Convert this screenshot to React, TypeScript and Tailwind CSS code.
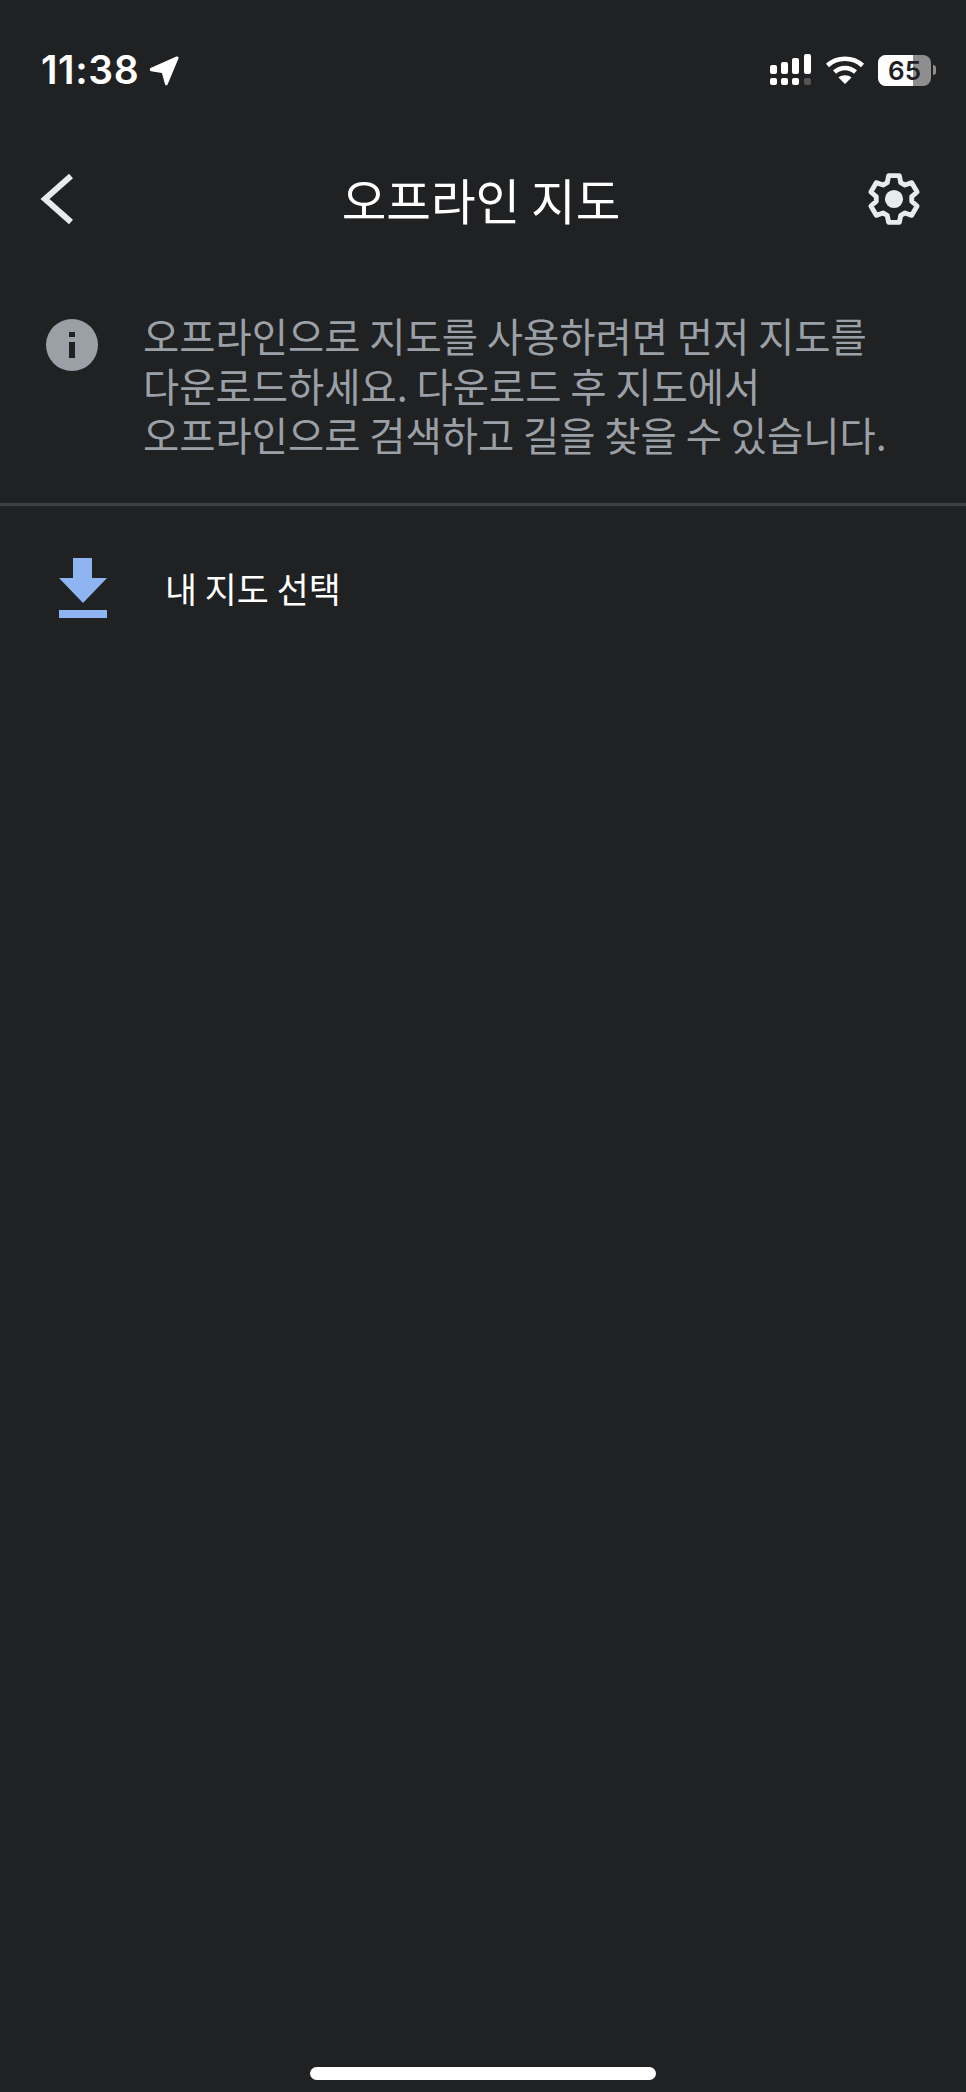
const ko = { fontFamily: '"Noto Sans CJK KR", "Liberation Sans", sans-serif' };

const StatusBar = () => (
    <div className="flex h-[100px] items-start justify-between pt-[48px] pl-[41px] pr-[30px]">
        <div className="flex items-center gap-[10px]">
            <span className="text-[39px] leading-[44px] font-semibold text-white tracking-[0.6px]" style={{ fontFamily: 'Inter, sans-serif' }}>11:38</span>
            <svg width="31" height="31" viewBox="0 0 30 30" fill="#fff"><path d="M1.500 12.500 26.500 1.500c1.500-.6 2.600.5 2 2L18 28.500c-.6 1.300-2.200 1.100-2.500-.2L12.500 17.500 2 15.800C.6 15.500.300 13.100 1.500 12.500Z" /></svg>
        </div>
        <div className="flex items-center gap-[13px] pt-[6px]">
            <svg width="42" height="32" viewBox="0 0 42 32" fill="#fff">
                <rect x="0" y="11" width="7" height="9" rx="2" /><rect x="11" y="8" width="7" height="12" rx="2" /><rect x="22" y="4" width="7" height="16" rx="2" /><rect x="34" y="0" width="7" height="20" rx="2" />
                <rect x="0" y="24" width="7" height="7" rx="2" /><rect x="11" y="24" width="7" height="7" rx="2" /><rect x="22" y="24" width="7" height="7" rx="2" /><rect x="34" y="24" width="7" height="7" rx="2" fill="#555" />
            </svg>
            <svg width="40" height="30" viewBox="0 0 40 30" fill="none" stroke="#fff" strokeWidth="4.500">
                <path d="M2.500 10.500C12 1.500 28 1.500 37.500 10.500" /><path d="M9.500 17c6-5.500 15-5.500 21 0" />
                <path d="M20 29 13.500 22.500c3.500-3 9.500-3 13 0Z" fill="#fff" stroke="none" />
            </svg>
            <div className="flex items-center gap-[2px]">
                <div className="relative h-[31px] w-[53px] overflow-hidden rounded-[8px] bg-[#8e8e8f]">
                    <div className="h-full w-[35px] bg-white" />
                    <span className="absolute inset-0 flex items-center justify-center text-[26px] font-semibold text-[#202124]" style={{ fontFamily: 'Inter, sans-serif' }}>65</span>
                </div>
                <div className="h-[10px] w-[3px] rounded-r-full bg-[#8e8e8f]" />
            </div>
        </div>
    </div>
);

export default function App() {
    return (
        <div className="flex h-[2092px] w-[966px] flex-col overflow-hidden bg-[#202123]" style={ko}>
            <StatusBar />

            <div className="grid h-[198px] grid-cols-[1fr_auto_1fr] items-start pt-[65px] pl-[40px] pr-[44px]">
                <svg width="36" height="50" viewBox="0 0 36 50" fill="none" stroke="#e8eaed" strokeWidth="6" className="mt-[9px]">
                    <path d="M31 2 5 25l26 23" strokeLinejoin="miter" />
                </svg>
                <h1 className="text-[48.500px] leading-[68px] text-white">오프라인 지도</h1>
                <svg width="56" height="56" viewBox="0 0 24 24" fill="none" stroke="#e8eaed" strokeWidth="2.100" strokeLinejoin="round" className="mt-[6px] justify-self-end">
                    <path d="M9.700 2h4.600l.6 3 1.800 1 2.900-1 2.300 4-2.300 2v2l2.300 2-2.300 4-2.900-1-1.800 1-.6 3H9.700l-.6-3-1.800-1-2.900 1-2.300-4 2.300-2v-2l-2.300-2 2.300-4 2.900 1 1.800-1Z" />
                    <circle cx="12" cy="12" r="3.900" fill="#e8eaed" stroke="none" />
                </svg>
            </div>

            <div className="flex h-[208px] gap-[45px] border-b-[3px] border-[#3c4043] pl-[46px] pt-[12px]">
                <svg width="52" height="52" viewBox="0 0 52 52" className="mt-[9px] shrink-0">
                    <circle cx="26" cy="26" r="26" fill="#9aa0a6" />
                    <rect x="23" y="13" width="6" height="5" fill="#202123" />
                    <rect x="23" y="23" width="6" height="16" fill="#202123" />
                </svg>
                <p className="text-[39.400px] leading-[49.500px] text-[#9aa0a6] whitespace-nowrap">
                    오프라인으로 지도를 사용하려면 먼저 지도를<br />
                    다운로드하세요. 다운로드 후 지도에서<br />
                    오프라인으로 검색하고 길을 찾을 수 있습니다.
                </p>
            </div>

            <div className="flex items-center gap-[57px] pl-[58px] pt-[52px]">
                <svg width="50" height="60" viewBox="0 0 50 60" fill="#8fb4f2">
                    <path d="M15 0h19v20h15L25 45 1 20h14Z" />
                    <rect x="1" y="52" width="48" height="8" />
                </svg>
                <span className="text-[34.800px] leading-[50px] text-white">내 지도 선택</span>
            </div>

            <div className="mt-auto mb-[12px] flex justify-center">
                <div className="h-[13px] w-[346px] rounded-full bg-white" />
            </div>
        </div>
    );
}
